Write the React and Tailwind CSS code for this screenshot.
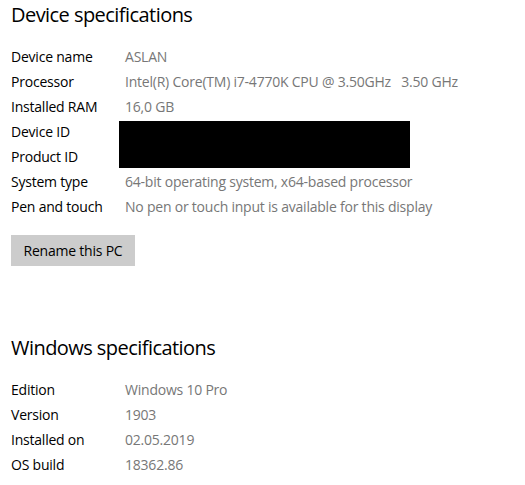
import React from 'react';

const deviceRows = [
  { label: 'Device name', value: 'ASLAN' },
  { label: 'Processor', value: 'Intel(R) Core(TM) i7-4770K CPU @ 3.50GHz\u00a0\u00a0\u00a03.50 GHz' },
  { label: 'Installed RAM', value: '16,0 GB' },
  { label: 'Device ID', value: null },
  { label: 'Product ID', value: null },
  { label: 'System type', value: '64-bit operating system, x64-based processor' },
  { label: 'Pen and touch', value: 'No pen or touch input is available for this display' },
];

const windowsRows = [
  { label: 'Edition', value: 'Windows 10 Pro' },
  { label: 'Version', value: '1903' },
  { label: 'Installed on', value: '02.05.2019' },
  { label: 'OS build', value: '18362.86' },
];

const SpecRow = ({ label, value }) => (
  <div className="flex h-[25px] items-center">
    <span className="w-[114px] shrink-0 text-black">{label}</span>
    {value && <span className="whitespace-nowrap text-[#777]">{value}</span>}
  </div>
);

const App = () => {
  return (
    <div
      className="min-h-[485px] w-[525px] bg-white pl-[11px] text-[14px] tracking-[-0.22px]"
      style={{ fontFamily: '"Open Sans", "Noto Sans", sans-serif' }}
    >
      {/* Device specifications */}
      <h2 className="pt-[1px] text-[20px] leading-[28px] tracking-[-0.55px] text-black">
        Device specifications
      </h2>

      <div className="relative mt-[15px]">
        {deviceRows.map((row) => (
          <SpecRow key={row.label} label={row.label} value={row.value} />
        ))}
        {/* redacted IDs */}
        <div className="absolute left-[108px] top-[77px] h-[47px] w-[291px] bg-black" />
      </div>

      <button className="mt-[16px] h-[31px] w-[124px] bg-[#cccccc] text-[14px] tracking-[-0.22px] text-black">
        Rename this PC
      </button>

      {/* Windows specifications */}
      <h2 className="mt-[68px] text-[20px] leading-[28px] tracking-[-0.55px] text-black">
        Windows specifications
      </h2>

      <div className="mt-[15px]">
        {windowsRows.map((row) => (
          <SpecRow key={row.label} label={row.label} value={row.value} />
        ))}
      </div>
    </div>
  );
};

export default App;
